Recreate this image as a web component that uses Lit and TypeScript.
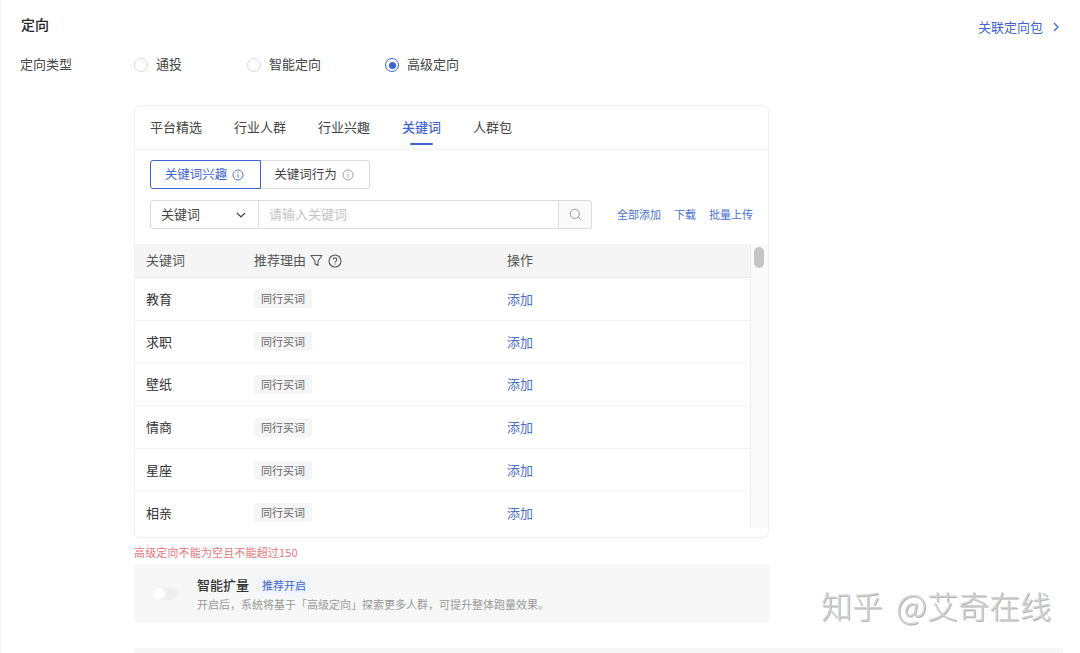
import { LitElement, html, css, svg } from "lit";
import { customElement } from "lit/decorators.js";

const info = (c: string) => html`<svg class="ic" width="12" height="12" viewBox="0 0 12 12" fill="none" stroke=${c} stroke-width="0.9"><circle cx="6" cy="6" r="5"/><path d="M6 5.2v3.4M6 3.2v1"/></svg>`;
const chevron = svg`<path d="M1 1l4 4-4 4" fill="none" stroke="currentColor" stroke-width="1.3"/>`;

@customElement("app-root")
export class AppRoot extends LitElement {
  static styles = css`
    :host { display: block; width: 1080px; height: 653px; position: relative; overflow: hidden; background: #fff; color: #333;
      font-family: "Noto Sans CJK SC", "Liberation Sans", sans-serif; font-size: 13px; }
    .page { height: 653px; box-sizing: border-box; padding: 14px 17px 0 20px; box-shadow: inset 1px 0 0 #f6f6f6; }
    .head { display: flex; justify-content: space-between; height: 20px; }
    .title { font-size: 14px; font-weight: 500; line-height: 20px; color: #222; padding-left: 1px; }
    .assoc { display: flex; align-items: center; gap: 8px; color: #3f66d0; line-height: 20px; position: relative; top: 3px; padding-right: 4px; }
    .assoc svg { margin-left: 2px; }
    .type { display: flex; margin-top: 20px; height: 20px; line-height: 20px; }
    .lbl { width: 114px; color: #444; }
    .radio { display: flex; align-items: center; gap: 8px; color: #444; }
    .dot { width: 12px; height: 12px; border: 1px solid #d9d9d9; border-radius: 50%; background: #fff; box-sizing: content-box; position: relative; top: 1px; }
    .dot.on { border-color: #3f66d0; }
    .dot.on::after { content: ""; position: absolute; inset: 2.5px; border-radius: 50%; background: #3f66d0; }
    .r1 { width: 113px; }
    .r2 { width: 138px; }
    .card { margin: 31px 0 0 114px; width: 633px; height: 431px; border: 1px solid #f0f0f0; border-radius: 6px; display: flex; flex-direction: column; overflow: hidden; }
    .tabs { display: flex; gap: 32px; height: 43px; padding: 0 15px; border-bottom: 1px solid #f2f2f2; line-height: 42px; flex: none; color: #444; }
    .tab { position: relative; }
    .tab.on { color: #3f66d0; font-weight: 500; }
    .tab.on::after { content: ""; position: absolute; left: 8px; right: 8px; bottom: 4px; height: 2px; border-radius: 1px; background: #3f66d0; }
    .seg { display: flex; margin: 10px 0 0 15px; height: 29px; flex: none; font-size: 12.5px; }
    .seg div { display: flex; align-items: center; justify-content: center; gap: 5px; box-sizing: border-box; border: 1px solid #dcdcdc; height: 29px; padding: 0 2px 2px 0; }
    .seg svg { position: relative; top: 1px; }
    .s1 { width: 111px; border-color: #3f66d0 !important; border-radius: 3px 0 0 3px; color: #3f66d0; }
    .s2 { width: 109px; border-left: 0 !important; border-radius: 0 3px 3px 0; color: #444; }
    .search { display: flex; align-items: center; margin: 11px 15px 0 15px; height: 29px; flex: none; }
    .select { width: 109px; height: 29px; box-sizing: border-box; border: 1px solid #dcdcdc; border-radius: 3px 0 0 3px; display: flex; align-items: center; justify-content: space-between; padding: 0 12px 2px 10px; color: #444; }
    .select svg { position: relative; top: 1px; }
    .input { width: 300px; height: 29px; box-sizing: border-box; border: 1px solid #dcdcdc; border-left: 0; padding-left: 10px; line-height: 25px; color: #c4c4c4; }
    .sbtn { width: 33px; height: 29px; box-sizing: border-box; border: 1px solid #dcdcdc; border-left: 0; border-radius: 0 3px 3px 0; background: #fafafa; display: flex; align-items: center; justify-content: center; }
    .links { margin-left: auto; display: flex; gap: 13px; font-size: 11px; color: #4a6fd6; padding-bottom: 2px; }
    .tablewrap { display: flex; margin-top: 15px; height: 284px; flex: none; overflow: hidden; }
    .table { width: 615px; flex: none; overflow: hidden; }
    .row { display: grid; grid-template-columns: 108px 253px 1fr; align-items: center; height: 42.8px; box-sizing: border-box; padding: 0 0 0 11px; border-bottom: 1px solid #f4f4f4; }
    .row.h { height: 34px; padding-bottom: 2px; background: #f5f5f5; border-bottom: 1px solid #e9e9e9; color: #555; }
    .hc { display: flex; align-items: center; gap: 4px; }
    .hc svg { position: relative; top: 1px; }
    .hc svg + svg { margin-left: 1px; }
    .tag { justify-self: start; font-size: 11px; color: #666; background: #f5f5f5; border-radius: 3px; padding: 0 7px; height: 19px; line-height: 18px; }
    .add { color: #4a6fc9; padding-bottom: 1px; }
    .cell { padding-bottom: 1px; }
    .track { flex: 1; border-left: 1px solid #ececec; background: #fafafa; padding: 3px 0 0 3px; box-sizing: border-box; }
    .thumb { width: 10px; height: 21px; border-radius: 5px; background: #c4c4c4; }
    .err { margin: 6px 0 0 114px; font-size: 11px; line-height: 16px; color: #e8767a; letter-spacing: .15px; }
    .panel { margin: 4px 0 0 114px; width: 636px; height: 59px; box-sizing: border-box; background: #f7f7f7; border-radius: 4px; display: flex; align-items: center; padding-left: 20px; }
    .switch { width: 24px; height: 13px; border-radius: 7px; background: #efefef; position: relative; flex: none; margin-right: 19px; }
    .switch::after { content: ""; position: absolute; left: 0; top: 1px; width: 11px; height: 11px; border-radius: 50%; background: #fff; }
    .pt { display: flex; align-items: center; gap: 8px; line-height: 20px; color: #333; font-weight: 500; }
    .badge { font-size: 11px; font-weight: 400; color: #3f66d0; background: #eef3fd; border-radius: 3px; padding: 0 5px; line-height: 18px; }
    .ps { font-size: 11px; line-height: 16px; color: #999; margin-top: 1px; }
    .strip { margin: 25px 0 0 114px; width: 929px; height: 5px; background: #f7f7f7; }
    .wm { position: absolute; left: 821px; top: 584px; font-size: 31px; line-height: 42px; white-space: pre; color: #d2d2d2; font-weight: 300; text-shadow: 1px 1px 0 #b4b4b4; font-family: "Noto Sans CJK SC", sans-serif; display: flex; }
    .wm .at { margin: 0 0 0 13px; font-size: 34px; }
  `;

  render() {
    const rows = ["教育", "求职", "壁纸", "情商", "星座", "相亲"];
    return html`
      <div class="page">
        <div class="head">
          <div class="title">定向</div>
          <div class="assoc">关联定向包<svg width="6" height="10" viewBox="0 0 6 10">${chevron}</svg></div>
        </div>
        <div class="type">
          <div class="lbl">定向类型</div>
          <div class="radio r1"><span class="dot"></span>通投</div>
          <div class="radio r2"><span class="dot"></span>智能定向</div>
          <div class="radio"><span class="dot on"></span>高级定向</div>
        </div>
        <div class="card">
          <div class="tabs">
            <div class="tab">平台精选</div><div class="tab">行业人群</div><div class="tab">行业兴趣</div>
            <div class="tab on">关键词</div><div class="tab">人群包</div>
          </div>
          <div class="seg">
            <div class="s1">关键词兴趣 ${info("#3f66d0")}</div>
            <div class="s2">关键词行为 ${info("#999")}</div>
          </div>
          <div class="search">
            <div class="select">关键词<svg width="10" height="6" viewBox="0 0 10 6"><path d="M1 1l4 4 4-4" fill="none" stroke="#444" stroke-width="1.2"/></svg></div>
            <div class="input">请输入关键词</div>
            <div class="sbtn"><svg width="13" height="13" viewBox="0 0 13 13" fill="none" stroke="#999" stroke-width="1"><circle cx="5.8" cy="5.8" r="4.6"/><path d="M9.2 9.2l2.8 2.8"/></svg></div>
            <div class="links"><span>全部添加</span><span>下载</span><span>批量上传</span></div>
          </div>
          <div class="tablewrap">
            <div class="table">
              <div class="row h">
                <div>关键词</div>
                <div class="hc">推荐理由
                  <svg width="13" height="13" viewBox="0 0 13 13" fill="none" stroke="#555" stroke-width="1.1"><path d="M1 1.5h11L8 7v4.5L5 10V7z" stroke-linejoin="round"/></svg>
                  <svg width="14" height="14" viewBox="0 0 14 14" fill="none" stroke="#555" stroke-width="1.1"><circle cx="7" cy="7" r="6"/><path d="M5.2 5.6a1.8 1.8 0 1 1 2.7 1.6c-.6.3-.9.7-.9 1.3M7 9.6v1"/></svg>
                </div>
                <div>操作</div>
              </div>
              ${rows.map((r) => html`<div class="row"><div class="cell">${r}</div><div class="tag">同行买词</div><div class="add">添加</div></div>`)}
            </div>
            <div class="track"><div class="thumb"></div></div>
          </div>
        </div>
        <div class="err">高级定向不能为空且不能超过150</div>
        <div class="panel">
          <div class="switch"></div>
          <div>
            <div class="pt">智能扩量<span class="badge">推荐开启</span></div>
            <div class="ps">开启后，系统将基于「高级定向」探索更多人群，可提升整体跑量效果。</div>
          </div>
        </div>
        <div class="strip"></div>
      </div>
      <div class="wm"><span>知乎</span><span class="at">@</span><span>艾奇在线</span></div>
    `;
  }
}
